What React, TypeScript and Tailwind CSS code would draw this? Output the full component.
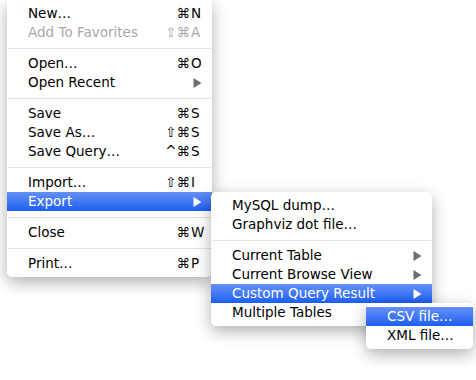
type Item =
  | { sep: true }
  | {
      sep?: false;
      label: string;
      mods?: string;
      keyChar?: string;
      disabled?: boolean;
      submenu?: boolean;
      active?: boolean;
    };

const fileMenu: Item[] = [
  { label: "New…", mods: "⌘", keyChar: "N" },
  { label: "Add To Favorites", mods: "⇧⌘", keyChar: "A", disabled: true },
  { sep: true },
  { label: "Open…", mods: "⌘", keyChar: "O" },
  { label: "Open Recent", submenu: true },
  { sep: true },
  { label: "Save", mods: "⌘", keyChar: "S" },
  { label: "Save As…", mods: "⇧⌘", keyChar: "S" },
  { label: "Save Query…", mods: "^⌘", keyChar: "S" },
  { sep: true },
  { label: "Import…", mods: "⇧⌘", keyChar: "I" },
  { label: "Export", submenu: true, active: true },
  { sep: true },
  { label: "Close", mods: "⌘", keyChar: "W" },
  { sep: true },
  { label: "Print…", mods: "⌘", keyChar: "P" },
];

const exportMenu: Item[] = [
  { label: "MySQL dump…" },
  { label: "Graphviz dot file…" },
  { sep: true },
  { label: "Current Table", submenu: true },
  { label: "Current Browse View", submenu: true },
  { label: "Custom Query Result", submenu: true, active: true },
  { label: "Multiple Tables" },
];

const queryMenu: Item[] = [
  { label: "CSV file…", active: true },
  { label: "XML file…" },
];

function Arrow({ white }: { white?: boolean }) {
  return (
    <svg width="9" height="10" viewBox="0 0 9 10" className="shrink-0">
      <polygon points="0.5,0 8.5,5 0.5,10" fill={white ? "#ffffff" : "#6e6e6e"} />
    </svg>
  );
}

function MenuRow({ item, arrowPad }: { item: Item; arrowPad: string }) {
  if (item.sep) {
    return (
      <div className="h-[12px] flex items-center px-[1px]">
        <div className="h-px w-full bg-[#e2e2e2]" />
      </div>
    );
  }
  const textColor = item.active
    ? "text-white"
    : item.disabled
    ? "text-[#a8a8a8]"
    : "text-black";
  return (
    <div
      className={`h-[19px] flex items-center pl-[21px] ${arrowPad} ${textColor} ${
        item.active ? "bg-gradient-to-b from-[#6590f6] to-[#1a5ef3]" : ""
      }`}
    >
      <span className="flex-1 whitespace-nowrap">{item.label}</span>
      {item.mods && (
        <span className="flex">
          <span className="text-right">{item.mods}</span>
          <span className="w-[12px] pl-[1px]">{item.keyChar}</span>
        </span>
      )}
      {item.submenu && <Arrow white={item.active} />}
    </div>
  );
}

export default function App() {
  return (
    <div
      className="relative w-[476px] h-[380px] bg-white overflow-hidden text-[13.5px] leading-none"
      style={{ fontFamily: '"DejaVu Sans", "Lucida Grande", sans-serif' }}
    >
      {/* File menu */}
      <div className="ml-[7px] w-[205px] bg-white rounded-b-[5px] pt-[4px] pb-[4px] shadow-[0_5px_16px_rgba(0,0,0,0.32)]">
        {fileMenu.map((item, i) => (
          <MenuRow key={i} item={item} arrowPad="pr-[10px]" />
        ))}
      </div>

      {/* Export submenu */}
      <div className="absolute left-[211px] top-[192px] w-[221px] bg-white rounded-[5px] pt-[4px] pb-[4px] shadow-[0_5px_16px_rgba(0,0,0,0.32)] overflow-hidden">
        {exportMenu.map((item, i) => (
          <MenuRow key={i} item={item} arrowPad="pr-[10px]" />
        ))}
      </div>

      {/* Custom Query Result submenu */}
      <div className="absolute left-[366px] top-[303px] w-[107px] bg-white rounded-[5px] pt-[4px] pb-[4px] shadow-[0_5px_16px_rgba(0,0,0,0.32)] overflow-hidden">
        {queryMenu.map((item, i) => (
          <MenuRow key={i} item={item} arrowPad="pr-[10px]" />
        ))}
      </div>
    </div>
  );
}
